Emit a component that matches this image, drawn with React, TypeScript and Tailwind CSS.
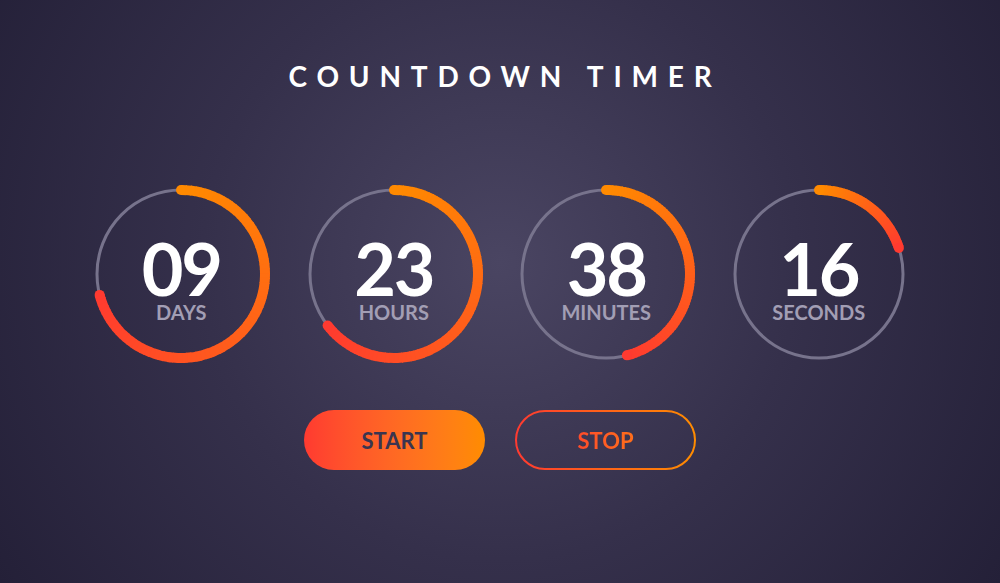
import React from "react";

type Unit = { value: string; label: string; progress: number };

const units: Unit[] = [
  { value: "09", label: "DAYS", progress: 0.71 },
  { value: "23", label: "HOURS", progress: 0.645 },
  { value: "38", label: "MINUTES", progress: 0.46 },
  { value: "16", label: "SECONDS", progress: 0.2 },
];

const START = [0xff, 0x8a, 0x00];
const END = [0xff, 0x3a, 0x30];

function mix(t: number) {
  const c = START.map((s, i) => Math.round(s + (END[i] - s) * t));
  return `rgb(${c[0]},${c[1]},${c[2]})`;
}

function point(angle: number, r: number) {
  const a = (angle * Math.PI) / 180;
  return [90 + r * Math.sin(a), 90 - r * Math.cos(a)];
}

// progress ring: thin grey track + gradient arc built from short slices
function Ring({ progress }: { progress: number }) {
  const r = 84;
  const sweep = progress * 360;
  const steps = 80;
  const step = sweep / steps;
  const slices = [];
  for (let i = 0; i < steps; i++) {
    const a0 = i * step;
    const a1 = Math.min(sweep, a0 + step + 0.6);
    const [x0, y0] = point(a0, r);
    const [x1, y1] = point(a1, r);
    slices.push(
      <path
        key={i}
        d={`M ${x0} ${y0} A ${r} ${r} 0 0 1 ${x1} ${y1}`}
        stroke={mix(i / steps)}
        strokeWidth={10}
        fill="none"
      />
    );
  }
  const [sx, sy] = point(0, r);
  const [ex, ey] = point(sweep, r);
  return (
    <svg viewBox="0 0 180 180" className="absolute inset-0 h-full w-full">
      <circle cx={90} cy={90} r={r} fill="none" stroke="#77738c" strokeWidth={3} />
      {slices}
      <circle cx={sx} cy={sy} r={5} fill={mix(0)} />
      <circle cx={ex} cy={ey} r={5} fill={mix(1)} />
    </svg>
  );
}

function Dial({ unit }: { unit: Unit }) {
  return (
    <div className="relative flex h-[180px] w-[180px] flex-col items-center justify-center pt-[11px]">
      <Ring progress={unit.progress} />
      <span className="relative text-[72px] font-bold leading-[60px] tracking-[-0.03em] text-white">
        {unit.value}
      </span>
      <span className="relative mt-[4px] text-[20px] font-bold leading-[20px] text-[#a29eb4]">
        {unit.label}
      </span>
    </div>
  );
}

// outlined pill with a red-to-orange stroke
function PillOutline() {
  return (
    <svg viewBox="0 0 181 60" className="absolute inset-0 h-full w-full">
      <defs>
        <linearGradient id="stopStroke" x1="0" y1="0" x2="1" y2="0">
          <stop offset="0" stopColor="#ff3a30" />
          <stop offset="1" stopColor="#ff8c00" />
        </linearGradient>
      </defs>
      <rect x={1} y={1} width={179} height={58} rx={29} fill="none" stroke="url(#stopStroke)" strokeWidth={2} />
    </svg>
  );
}

export default function App() {
  return (
    <div className="flex h-[583px] w-full flex-col items-center bg-[radial-gradient(circle_at_50%_45%,#4a4562_0%,#35304b_50%,#242038_100%)] pt-[60px] font-['Lato',sans-serif]">
      <h1 className="h-8 pl-[10px] text-[28px] font-bold leading-8 tracking-[0.35em] text-white">
        COUNTDOWN TIMER
      </h1>

      <div className="mt-[92px] flex gap-[32.5px]">
        {units.map((u) => (
          <Dial key={u.label} unit={u} />
        ))}
      </div>

      <div className="mt-[46px] flex gap-[30px]">
        <button className="h-[60px] w-[181px] rounded-full bg-linear-to-r from-[#ff3a30] to-[#ff8c00] text-[22px] font-bold text-[#3a3550]">
          START
        </button>
        <button className="relative h-[60px] w-[181px] rounded-full text-[22px] font-bold">
          <PillOutline />
          <span className="relative bg-linear-to-r from-[#ff4a2a] to-[#ff6e1a] bg-clip-text text-transparent">
            STOP
          </span>
        </button>
      </div>
    </div>
  );
}
